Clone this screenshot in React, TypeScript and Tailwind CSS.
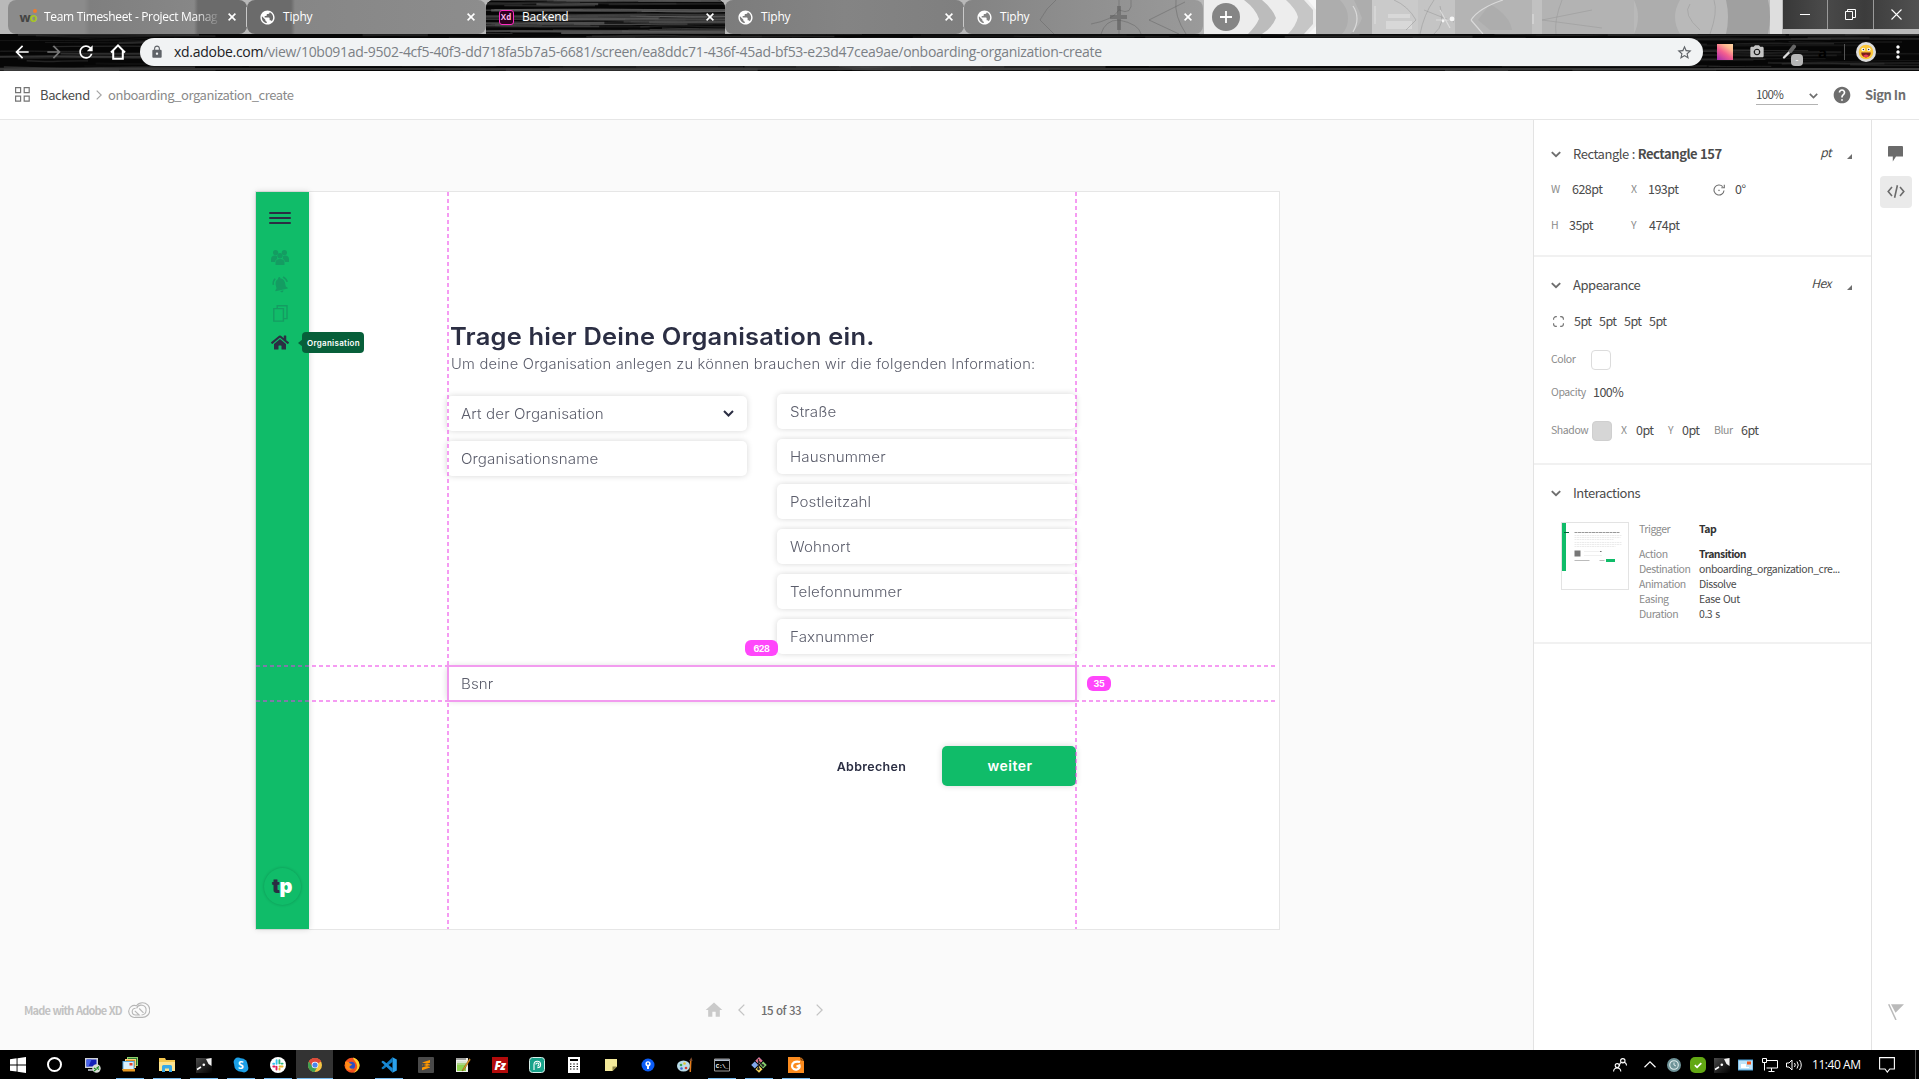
import React from "react";
import {
  MdPublic,
  MdLock,
  MdStarBorder,
  MdArrowBack,
  MdArrowForward,
  MdRefresh,
  MdMoreVert,
  MdHelp,
  MdHome,
  MdCameraAlt,
  MdNotificationsActive,
} from "react-icons/md";
import { FaHome } from "react-icons/fa";

/* ---------- browser theme textures ---------- */

function rng(seed: number) {
  let s = seed;
  return () => {
    s = (s * 16807) % 2147483647;
    return s / 2147483647;
  };
}

function Streaks({ w, h, seed, n, strong }: { w: number; h: number; seed: number; n: number; strong?: boolean }) {
  const r = rng(seed);
  const paths = Array.from({ length: n }, () => {
    const x = r() * w - 60;
    const y = r() * h;
    const len = 60 + r() * 200;
    const d = (r() - 0.5) * 4;
    const g = Math.round((strong ? 50 : 30) + r() * (strong ? 70 : 45));
    return {
      d: `M${x} ${y} q${len / 3} ${d} ${len / 2} ${d / 2} t${len / 2} ${-d / 3}`,
      c: `rgb(${g},${g},${g})`,
      sw: 0.6 + r() * 1.8,
      o: 0.3 + r() * 0.5,
    };
  });
  return (
    <svg className="absolute inset-0 h-full w-full" viewBox={`0 0 ${w} ${h}`} preserveAspectRatio="none">
      <rect width={w} height={h} fill="#060606" />
      {paths.map((p, i) => (
        <path key={i} d={p.d} stroke={p.c} strokeWidth={p.sw} opacity={p.o} fill="none" />
      ))}
      {!strong && <path d={`M0 ${h - 2}h${w}`} stroke="#4a4a4a" strokeWidth="2" opacity="0.7" />}
    </svg>
  );
}

function Forest() {
  return (
    <svg className="absolute inset-0 h-full w-full" viewBox="0 0 1919 34">
      <rect width="1919" height="34" fill="#b9b9b9" />
      <path d="M1204 0h112v34h-112z" fill="#ededed" />
      <path d="M1244 0h18q10 8 14 18q-4 10-14 16h-14q8-8 11-15q-3-10-15-19z" fill="#bcbcbc" />
      <path d="M1286 0h18l9 10v14l-9 10h-16q8-8 10-17q-2-8-12-17z" fill="#c6c6c6" />
      <path d="M1316 0h56q4 16 0 34h-56z" fill="#adadad" />
      <path d="M1340 0q8 8 8 18t-6 16h8q10-8 12-16q-4-10-8-18z" fill="#b6b6b6" />
      <path d="M1372 0h46v34h-46z" fill="#cacaca" />
      <path d="M1388 14h22v4h-22zM1386 21h26v8h-26z" fill="#d8d8d8" />
      <path d="M1418 0h37v34h-37z" fill="#c4c4c4" />
      <path d="M1455 0h77v34h-77z" fill="#b4b4b4" />
      <path d="M1490 4q20 12 22 26h-22l-12-10z" fill="#adadad" />
      <path d="M1532 0h10v34h-10z" fill="#c1c1c1" />
      <path d="M1542 0h92v34h-92z" fill="#b3b3b3" />
      <path d="M1634 0h46q-10 17 0 34h-46q8-17 0-34z" fill="#adadad" />
      <path d="M1726 0h42q4 16 0 34h-42q4-17 0-34z" fill="#a0a0a0" />
      <path d="M1770 0h12v34h-12z" fill="#dedede" />
      <g fill="none" stroke="#999" strokeWidth="0.9" opacity="0.6">
        <path d="M1394 0q14 6 22 20l-10 10M1420 34q4-20 14-34M1424 10l30 12M1440 6q6 18-6 28M1542 20l50-10M1542 20l60 8M1690 4q-8 10 10 26M1714 0q4 12-4 34M1556 34q-2-14 6-34" />
      </g>
      <g fill="none" stroke="#e2e2e2" strokeWidth="1.200" opacity="0.8">
        <path d="M1471 20q8-12 32-20M1471 20l12 14M1436 20h14M1440 10l10 18M1353 6q8 12 0 26M1375 6v18M1533 14v10" />
      </g>
      <g fill="#f6f6f6">
        <circle cx="1452" cy="19" r="2.400" />
        <circle cx="1443" cy="21" r="1.400" />
        <path d="M1308 0h8v10zM1308 34h8v-8z" />
      </g>
    </svg>
  );
}

function Branches() {
  return (
    <svg className="absolute inset-0 h-full w-full" viewBox="0 0 239 34">
      <g fill="none" stroke="#666" strokeWidth="1" opacity="0.5">
        <path d="M92 0q-10 8-16 20l14 14M155 0v10q-6 10-28 14M155 34v-14M155 10q14 6 12-10M155 20q20 4 22 14M155 20q-14 0-18 14M185 20l36-18M185 20l30 14M212 0q-2 16 10 34" />
      </g>
      <path d="M153 6h4v24h-4zM146 15h17v4h-17z" fill="#555" opacity="0.5" />
    </svg>
  );
}

/* ---------- browser chrome ---------- */

function Close() {
  return (
    <svg className="h-2 w-2 shrink-0" viewBox="0 0 8 8">
      <path d="M.6.6l6.8 6.8M7.4.6L.6 7.4" stroke="#fff" strokeWidth="1.6" />
    </svg>
  );
}

type TabProps = { title: string; icon: React.ReactNode; tone: string; active?: boolean; branches?: boolean; sep?: boolean; wide?: boolean };

function Tab({ title, icon, tone, active, branches, sep, wide }: TabProps) {
  return (
    <div className={`relative flex h-[34px] w-[239px] shrink-0 items-center overflow-hidden ${active ? "rounded-t-lg" : "rounded-lg"} ${tone}`}>
      {active && <Streaks w={239} h={34} seed={77} n={70} strong />}
      {branches && <Branches />}
      {sep && <div className="absolute right-0 top-[7px] h-5 w-px bg-[#c9c9c9]" />}
      <div className="relative flex w-full items-center pl-3 pr-[11px]">
        <div className="flex h-4 w-4 shrink-0 items-center justify-center">{icon}</div>
        <div
          className={`ml-2 h-4 w-[176px] shrink-0 whitespace-nowrap font-['Open_Sans'] text-[12px] leading-4 text-white ${
            wide ? "tracking-[-0.32px] [mask-image:linear-gradient(to_right,#000_150px,transparent_178px)]" : "tracking-[-0.2px]"
          }`}
        >
          {title}
        </div>
        <div className="ml-auto">
          <Close />
        </div>
      </div>
    </div>
  );
}

const globe = <MdPublic className="h-[17px] w-[17px] shrink-0 text-white" />;

function TabStrip() {
  return (
    <div className="relative flex h-[34px] pl-2">
      <Forest />
      <Tab
        title="Team Timesheet - Project Manag"
        tone="bg-[linear-gradient(to_right,#8b8b8b_0,#8b8b8b_76px,#7f7f7f_82px,#878787_186px,#6b6b6b_190px)]"
        sep
        wide
        icon={
          <div className="relative font-['Open_Sans'] text-[13px] font-bold leading-4 tracking-[-1px] text-[#444]">
            w<span className="text-[#a6c526]">o</span>
            <div className="absolute right-0 top-0 h-1 w-1 rounded-full bg-[#f07a2d]" />
          </div>
        }
      />
      <Tab title="Tiphy" icon={globe} tone="bg-[linear-gradient(to_right,#6b6b6b_0,#6b6b6b_44px,#868686_48px,#8d8d8d)]" />
      <Tab
        title="Backend"
        tone="bg-black"
        active
        icon={
          <div className="flex h-[15px] w-[15px] items-center justify-center rounded-[3px] border border-[#ff2bc2] bg-[#2e001f] font-['Open_Sans'] text-[8px] font-bold leading-none text-[#ffb3ea]">
            Xd
          </div>
        }
      />
      <Tab title="Tiphy" icon={globe} tone="bg-[linear-gradient(to_right,#7c7c7c,#848484_50%,#7f7f7f)]" sep />
      <Tab title="Tiphy" icon={globe} tone="bg-[linear-gradient(to_right,#838383,#8f8f8f_50%,#9a9a9a)]" branches />
      <div className="relative ml-[9px] mt-[3px] flex h-7 w-7 items-center justify-center rounded-full bg-[#858585]">
        <svg className="h-3 w-3" viewBox="0 0 12 12">
          <path d="M6 0v12M0 6h12" stroke="#fff" strokeWidth="1.8" />
        </svg>
      </div>
      <div className="relative ml-auto flex h-[29px] w-[136px] bg-[linear-gradient(to_right,#383838,#4a4a4a_30%,#3c3c3c_60%,#515151)]">
        <div className="flex w-[45px] items-center justify-center border-r border-[#9a9a9a]">
          <div className="h-px w-[10px] bg-white" />
        </div>
        <div className="flex w-[46px] items-center justify-center border-r border-[#9a9a9a]">
          <svg className="h-[11px] w-[11px]" viewBox="0 0 11 11" fill="none" stroke="#fff">
            <path d="M.5 2.5h7v8h-7zM2.5 2.5v-2h8v8h-3" />
          </svg>
        </div>
        <div className="flex w-[45px] items-center justify-center">
          <svg className="h-[11px] w-[11px]" viewBox="0 0 11 11">
            <path d="M.5.5l10 10M10.5.5l-10 10" stroke="#fff" strokeWidth="1.1" />
          </svg>
        </div>
      </div>
    </div>
  );
}

function Toolbar() {
  return (
    <div className="relative flex h-[37px] items-center pb-px pl-3">
      <Streaks w={1919} h={37} seed={4242} n={190} />
      <div className="relative flex w-full items-center">
        <MdArrowBack className="h-5 w-5 text-white" />
        <MdArrowForward className="ml-3 h-5 w-5 text-[#777]" />
        <MdRefresh className="ml-3 h-5 w-5 text-white" />
        <svg className="ml-3 h-5 w-5" viewBox="0 0 20 20" fill="none" stroke="#fff" strokeWidth="2">
          <path d="M3 10.5L10 3.4l7 7.1M5.2 9v7.8h9.6V9" />
        </svg>
        <div className="ml-3 flex h-7 w-[1563px] items-center rounded-full bg-[#f1f3f4] pl-[10px] pr-[10px]">
          <MdLock className="h-[14px] w-[14px] text-[#5f6368]" />
          <div className="ml-[10px] flex-1 whitespace-nowrap font-['Open_Sans'] text-[14px] leading-5 tracking-[-0.285px] text-[#7b8085]">
            <span className="text-[#202124]">xd.adobe.com</span>
            /view/10b091ad-9502-4cf5-40f3-dd718fa5b7a5-6681/screen/ea8ddc71-436f-45ad-bf53-e23d47cea9ae/onboarding-organization-create
          </div>
          <MdStarBorder className="h-[17px] w-[17px] text-[#5f6368]" />
        </div>
        <div className="ml-[14px] h-4 w-4 bg-[linear-gradient(35deg,#a32bb0,#f4608f_45%,#ffb98f_75%,#ffd9a8)]" />
        <MdCameraAlt className="ml-4 h-4 w-4 text-[#c4c4c4]" />
        <div className="relative ml-[17px] h-4 w-4">
          <svg className="h-4 w-4" viewBox="0 0 16 16">
            <path d="M2 13.5L8.5 7" stroke="#ddd" strokeWidth="2.4" strokeLinecap="round" />
            <path d="M8.5 7L12 2.5" stroke="#666" strokeWidth="4" strokeLinecap="round" />
          </svg>
          <div className="absolute left-[9px] top-[10px] h-3 w-3 rounded-sm bg-[#b5b5b5] text-center font-['Open_Sans'] text-[9px] leading-[11px] text-white">-</div>
        </div>
        <div className="ml-5 w-[10px] font-['Open_Sans'] text-[15px] font-bold leading-4 text-black">a</div>
        <div className="ml-4 h-4 w-px bg-[#555]" />
        <svg className="ml-[11px] h-5 w-5" viewBox="0 0 20 20">
          <circle cx="10" cy="10" r="10" fill="#ddd" />
          <circle cx="10" cy="10" r="7.3" fill="#fbc73a" />
          <path d="M5.2 10.5h9.6a4.8 5 0 0 1-9.6 0z" fill="#7a1f1a" />
          <path d="M7 14q3-3 6 0q-3 2.4-6 0z" fill="#ee3d5a" />
          <circle cx="7.2" cy="7.5" r="1.8" fill="#fff" />
          <circle cx="12.8" cy="7.5" r="1.8" fill="#fff" />
          <circle cx="7.4" cy="7.5" r=".8" fill="#333" />
          <circle cx="12.6" cy="7.5" r=".8" fill="#333" />
        </svg>
        <MdMoreVert className="ml-3 h-5 w-5 text-white" />
      </div>
    </div>
  );
}

function AppHeader() {
  return (
    <div className="flex h-[49px] items-center border-b border-[#e6e6e6] bg-white pb-px pl-[15px] pr-[13px] font-['Noto_Sans_CJK_SC'] text-[#4b4b4b]">
      <svg className="h-[15px] w-[15px]" viewBox="0 0 15 15" fill="none" stroke="#747474" strokeWidth="1.2">
        <path d="M.6.6h5v5h-5zM9.2.6h5v5h-5zM.6 9.2h5v5h-5zM9.2 9.2h5v5h-5z" />
      </svg>
      <div className="ml-[10px] w-[49px] whitespace-nowrap text-[13px] leading-5 tracking-[-0.4px]">Backend</div>
      <svg className="ml-[7px] h-[10px] w-[6px]" viewBox="0 0 6 10" fill="none" stroke="#a5a5a5" strokeWidth="1.2">
        <path d="M.7.6L5.2 5 .7 9.4" />
      </svg>
      <div className="ml-[6px] whitespace-nowrap text-[13px] leading-5 tracking-[-0.44px] text-[#8a8a8a]">onboarding_organization_create</div>
      <div className="ml-auto flex h-5 w-[62px] items-center justify-between border-b border-[#b3b3b3] text-[11.5px] leading-5 tracking-[-0.6px]">
        <span>100%</span>
        <svg className="mt-1 h-[6px] w-[9px]" viewBox="0 0 9 6" fill="none" stroke="#6e6e6e" strokeWidth="1.7">
          <path d="M.8.8l3.7 3.7L8.200.8" />
        </svg>
      </div>
      <MdHelp className="ml-[14px] h-5 w-5 text-[#6e6e6e]" />
      <div className="ml-[13px] w-[41px] whitespace-nowrap text-[13px] font-bold leading-5 tracking-[-0.45px] text-[#6e6e6e]">Sign In</div>
    </div>
  );
}

/* ---------- artboard ---------- */

function Field({ label, children, offset, pad }: { label: string; children?: React.ReactNode; offset?: string; pad?: string }) {
  return (
    <div
      className={`flex h-[35px] items-center justify-between rounded-[5px] bg-white pr-[13px] shadow-[0_0_6px_rgba(0,0,0,0.16)] ${pad ?? "pl-[13px]"} ${offset ?? ""}`}
    >
      <span className="origin-left scale-x-[1.08] font-['Inter'] text-[14px] font-light leading-5 tracking-[0.1px] text-[#5b5d6b]">{label}</span>
      {children}
    </div>
  );
}

function Artboard() {
  return (
    <div className="relative ml-[255px] mt-[71px] flex h-[739px] w-[1025px] border border-[#e6e6e6] bg-white">
      <div className="relative flex w-[53px] flex-col items-center bg-[#10bc69] shadow-[0_0_6px_rgba(0,0,0,0.16)]">
        <div className="mr-[5px] mt-5 flex flex-col gap-[3px]">
          <div className="h-[2px] w-[22px] rounded-full bg-[#2b2e43]" />
          <div className="h-[2px] w-[22px] rounded-full bg-[#2b2e43]" />
          <div className="h-[2px] w-[22px] rounded-full bg-[#2b2e43]" />
        </div>
        <svg className="mr-[5px] mt-[26px] h-[15px] w-[18px]" viewBox="0 0 18 15" fill="#149c62">
          <circle cx="4.600" cy="2.600" r="2.600" />
          <circle cx="13.400" cy="2.600" r="2.600" />
          <path d="M0 12V9.500Q0 5.600 4 5.600q1.400 0 2 .6A4 4 0 0 0 6.400 8.800Q4.200 9.800 4 12zM18 12V9.500Q18 5.600 14 5.600q-1.400 0-2 .6A4 4 0 0 1 11.600 8.800Q13.800 9.800 14 12z" />
          <circle cx="9" cy="5.700" r="2.700" />
          <path d="M4.500 15v-2.500Q4.500 8.900 9 8.900t4.500 3.600V15z" />
        </svg>
        <MdNotificationsActive className="mr-[5px] mt-[10px] h-[19px] w-[19px] -rotate-12 text-[#149c62]" />
        <svg className="mr-[5px] mt-[11px] h-[17px] w-[15px]" viewBox="0 0 15 17" fill="none" stroke="#149c62" strokeWidth="1.4">
          <path d="M.8 3.600h9.600v12.500H.8z" />
          <path d="M4.200 3.200V.8h9.800v12.800h-3.200" />
        </svg>
        <FaHome className="mr-[5px] mt-[11px] h-[19px] w-[18px] text-[#2b2e43]" />
        <div className="mb-6 mr-px mt-auto flex h-[37px] w-[37px] items-center justify-center rounded-full pb-[2px] font-['Inter'] text-[20px] font-black leading-none tracking-[-0.5px] text-white shadow-[0_0_3px_rgba(0,0,0,0.22)]">
          <span className="text-[#2b2e43]">t</span>p
        </div>
        <div className="absolute left-[46px] top-[140px] flex h-[21px] w-[62px] items-center justify-center rounded-sm bg-[#075f3a] pl-px font-['Inter'] text-[8px] font-semibold tracking-[0.3px] text-white">
          Organisation
          <div className="absolute -left-1 top-[7px] h-0 w-0 border-y-[4px] border-r-[5px] border-y-transparent border-r-[#075f3a]" />
        </div>
      </div>

      <div className="ml-[138px] w-[629px] pt-[129px]">
        <h1 className="ml-[3px] origin-left scale-x-[1.061] whitespace-nowrap font-['Inter'] text-[24px] font-semibold leading-[32px] tracking-[0.2px] text-[#2b2e43]">
          Trage hier Deine Organisation ein.
        </h1>
        <p className="ml-1 origin-left scale-x-[1.05] whitespace-nowrap font-['Inter'] text-[14px] font-light leading-[22px] tracking-[0.2px] text-[#5b5d6b]">
          Um deine Organisation anlegen zu können brauchen wir die folgenden Information:
        </p>
        <div className="mt-[19px] grid grid-cols-[300px_299px] gap-x-[30px]">
          <div className="flex flex-col gap-[10px] pt-[2px]">
            <Field label="Art der Organisation" pad="pl-[14px]">
              <svg className="h-[7px] w-[11px]" viewBox="0 0 11 7" fill="none" stroke="#2b2e43" strokeWidth="2">
                <path d="M1 1l4.500 4.500L10 1" />
              </svg>
            </Field>
            <Field label="Organisationsname" pad="pl-[14px]" />
          </div>
          <div className="flex flex-col gap-[10px]">
            <Field label="Straße" />
            <Field label="Hausnummer" />
            <Field label="Postleitzahl" />
            <Field label="Wohnort" />
            <Field label="Telefonnummer" />
            <Field label="Faxnummer" />
          </div>
        </div>
        <Field label="Bsnr" offset="mt-3" pad="pl-[14px]" />
        <div className="mt-[45px] flex items-center justify-end">
          <span className="mr-[37px] mt-[2px] origin-center scale-x-[1.04] font-['Inter'] text-[12px] font-semibold tracking-[0.3px] text-[#2b2e43]">Abbrechen</span>
          <div className="flex h-10 w-[134px] items-center justify-center rounded-[5px] bg-[#10bc69] pb-px pl-[2px] font-['Inter'] text-[14px] font-semibold tracking-[0.5px] text-white shadow-[0_0_6px_rgba(0,0,0,0.16)]">
            weiter
          </div>
        </div>
      </div>

      {/* measurement guides of the selected rectangle */}
      <div className="absolute left-[191px] top-0 h-full w-[2px] bg-[repeating-linear-gradient(to_bottom,rgba(236,57,230,0.5)_0_4px,transparent_4px_7px)]" />
      <div className="absolute left-[819px] top-0 h-full w-[2px] bg-[repeating-linear-gradient(to_bottom,rgba(236,57,230,0.5)_0_4px,transparent_4px_7px)]" />
      <div className="absolute left-0 top-[473px] h-[2px] w-[1022px] bg-[repeating-linear-gradient(to_right,rgba(236,57,230,0.5)_0_4px,transparent_4px_7px)]" />
      <div className="absolute left-0 top-[508px] h-[2px] w-[1022px] bg-[repeating-linear-gradient(to_right,rgba(236,57,230,0.5)_0_4px,transparent_4px_7px)]" />
      <div className="absolute left-[191px] top-[473px] h-[37px] w-[630px] border-2 border-[#f29bef]" />
      <div className="absolute left-[489px] top-[448px] flex h-4 w-[33px] items-center justify-center rounded-md bg-[#ff47fb] font-['Inter'] text-[9px] font-bold leading-none tracking-[-0.4px] text-white">
        628
      </div>
      <div className="absolute left-[831px] top-[484px] flex h-[15px] w-6 items-center justify-center rounded-md bg-[#ff47fb] font-['Inter'] text-[9px] font-bold leading-none tracking-[-0.4px] text-white">
        35
      </div>
    </div>
  );
}

function CanvasFooter() {
  return (
    <div className="mb-[30px] mt-auto flex h-5 items-center pl-6 font-['Noto_Sans_CJK_SC']">
      <span className="w-[95px] whitespace-nowrap text-[11px] font-bold leading-5 tracking-[-0.85px] text-[#c2c2c2] [word-spacing:0.8px]">Made with Adobe XD</span>
      <svg className="ml-[9px] h-4 w-[22px]" viewBox="0 0 22 16" fill="none" stroke="#b5b5b5" strokeWidth="1.1">
        <path d="M7.500 15.400h7a7.200 7.200 0 0 0 0-14.600 7.200 7.200 0 0 0-6 3A5.800 5.800 0 0 0 .7 9.600a6 6 0 0 0 6.800 5.800z" />
        <path d="M13.500 13a4.900 4.900 0 1 0-4.900-6.600M7.600 6.200a3.400 3.400 0 1 0 0 6.800h3.600L6.800 8.800M15.500 10.800L11.200 6.500" />
      </svg>
      <MdHome className="ml-[554px] h-5 w-5 text-[#cacaca]" />
      <svg className="ml-[14px] h-3 w-[7px]" viewBox="0 0 7 12" fill="none" stroke="#c4c4c4" strokeWidth="1.300">
        <path d="M6.300.6L.9 6l5.400 5.400" />
      </svg>
      <span className="ml-4 w-[40px] whitespace-nowrap text-[11.5px] font-medium leading-5 tracking-[-0.55px] text-[#6e6e6e] [word-spacing:1px]">15 of 33</span>
      <svg className="ml-[15px] h-3 w-[7px]" viewBox="0 0 7 12" fill="none" stroke="#c4c4c4" strokeWidth="1.300">
        <path d="M.7.6L6.100 6 .7 11.400" />
      </svg>
    </div>
  );
}

/* ---------- inspector ---------- */

function SectionHead({ children, unit }: { children: React.ReactNode; unit?: string }) {
  return (
    <div className="flex h-5 items-center">
      <svg className="h-[7px] w-[10px]" viewBox="0 0 10 7" fill="none" stroke="#6e6e6e" strokeWidth="1.900">
        <path d="M.8 1.100L5 5.200l4.200-4.100" />
      </svg>
      <div className="ml-3 whitespace-nowrap text-[13px] leading-5 tracking-[-0.45px] [word-spacing:0.4px]">{children}</div>
      {unit && (
        <div className="ml-auto flex items-center">
          <span className="-mt-1 text-[12px] italic leading-5 tracking-[-0.5px]">{unit}</span>
          <svg className="ml-4 mt-[5px] h-[5px] w-[5px]" viewBox="0 0 5 5">
            <path d="M5 0v5H0z" fill="#6e6e6e" />
          </svg>
        </div>
      )}
    </div>
  );
}

const labelText = "text-[10.5px] tracking-[-0.4px] text-[#8c8c8c]";
const valueText = "text-[12.5px] tracking-[-0.55px]";

function Val({ k, v, kw, w }: { k: React.ReactNode; v: string; kw: string; w?: string }) {
  return (
    <div className={`flex items-center ${w ?? ""}`}>
      <span className={`${kw} ${labelText}`}>{k}</span>
      <span className={valueText}>{v}</span>
    </div>
  );
}

function Thumbnail() {
  return (
    <div className="h-[68px] w-[68px] border border-[#e3e3e3] bg-white">
      <svg className="h-[66px] w-[66px]" viewBox="0 0 66 66">
        <rect width="4" height="48" fill="#10bc69" />
        <rect x="2" y="9" width="5" height="1" fill="#075f3a" />
        <path d="M12.500 9.500h45" stroke="#999" strokeWidth="1" strokeDasharray="3 .5" />
        <path d="M12.500 12.500h47M12.500 14.500h46M12.500 16.500h39M12.500 19.500h47M12.500 21.500h47M12.500 23.500h41" stroke="#ececec" strokeWidth="1" strokeDasharray="2 .5" />
        <rect x="12.500" y="27.500" width="6" height="6" fill="#777" />
        <path d="M22 28.500h18M22 32.500h18" stroke="#f0f0f0" />
        <rect x="38" y="28" width="1.500" height="1" fill="#777" />
        <path d="M12.500 37.500h15M37.500 37.500h5" stroke="#bbb" />
        <rect x="44" y="36" width="9" height="3" fill="#10bc69" />
      </svg>
    </div>
  );
}

const interactions: [string, string, boolean][] = [
  ["Action", "Transition", true],
  ["Destination", "onboarding_organization_cre...", false],
  ["Animation", "Dissolve", false],
  ["Easing", "Ease Out", false],
  ["Duration", "0.3 s", false],
];

function Inspector() {
  return (
    <div className="w-[338px] border-l border-[#e3e3e3] bg-white font-['Noto_Sans_CJK_SC'] leading-5 text-[#4b4b4b]">
      <div className="h-[137px] border-b-2 border-[#f1f1f1] pl-[17px] pr-[19px] pt-6">
        <SectionHead unit="pt">
          Rectangle : <b>Rectangle 157</b>
        </SectionHead>
        <div className="mt-[15px] flex h-5 items-center">
          <Val k="W" v="628pt" kw="w-[21px]" w="w-[80px]" />
          <Val k="X" v="193pt" kw="w-[17px]" w="w-[82px]" />
          <svg className="mt-[2px] h-3 w-3" viewBox="0 0 12 12" fill="none" stroke="#6e6e6e" strokeWidth="1.100">
            <path d="M11 6.500A5 5 0 1 1 9.700 2.600M11.300.8v3H8.300" />
            <circle cx="6" cy="6.300" r=".5" fill="#6e6e6e" strokeWidth=".5" />
          </svg>
          <span className={`ml-[10px] ${valueText}`}>0°</span>
        </div>
        <div className="mt-4 flex h-5 items-center">
          <Val k="H" v="35pt" kw="w-[18px]" w="w-[80px]" />
          <Val k="Y" v="474pt" kw="w-[18px]" />
        </div>
      </div>

      <div className="h-[208px] border-b-2 border-[#f1f1f1] pl-[17px] pr-[19px] pt-[18px]">
        <SectionHead unit="Hex">Appearance</SectionHead>
        <div className={`mt-4 flex h-5 items-center pl-[2px] ${valueText}`}>
          <svg className="mt-px h-[11px] w-[11px]" viewBox="0 0 11 11" fill="none" stroke="#6e6e6e" strokeWidth="1.100">
            <path d="M.6 3.800V3A2.400 2.400 0 0 1 3 .6h.8M7.200.6H8A2.400 2.400 0 0 1 10.400 3v.8M10.400 7.200V8A2.400 2.400 0 0 1 8 10.400h-.8M3.800 10.400H3A2.400 2.400 0 0 1 .6 8v-.8" />
          </svg>
          <span className="ml-[10px] w-[25px]">5pt</span>
          <span className="w-[25px]">5pt</span>
          <span className="w-[25px]">5pt</span>
          <span>5pt</span>
        </div>
        <div className="mt-[18px] flex h-5 items-center">
          <span className={`w-[40px] ${labelText}`}>Color</span>
          <div className="mt-px h-5 w-5 rounded-sm border border-[#dcdcdc] bg-white" />
        </div>
        <div className="mt-[13px] flex h-5 items-center">
          <span className={`w-[42px] ${labelText}`}>Opacity</span>
          <span className={valueText}>100%</span>
        </div>
        <div className="mt-[18px] flex h-5 items-center">
          <span className={`w-[41px] ${labelText}`}>Shadow</span>
          <div className="mr-[9px] mt-px h-5 w-5 rounded-sm border border-[#cfcfcf] bg-[#d6d6d6]" />
          <Val k="X" v="0pt" kw="w-[15px]" w="w-[47px]" />
          <Val k="Y" v="0pt" kw="w-[14px]" w="w-[46px]" />
          <Val k="Blur" v="6pt" kw="w-[27px]" />
        </div>
      </div>

      <div className="h-[179px] border-b-2 border-[#f1f1f1] pl-[17px] pt-[18px]">
        <SectionHead>Interactions</SectionHead>
        <div className="ml-[10px] mt-[19px] flex">
          <Thumbnail />
          <div className="-mt-px ml-[10px] text-[10.5px] leading-[15px] tracking-[-0.44px] [word-spacing:1px]">
            <div className="flex">
              <span className="w-[60px] text-[#8c8c8c]">Trigger</span>
              <b className="text-[#323232]">Tap</b>
            </div>
            <div className="h-[10px]" />
            {interactions.map(([k, v, bold]) => (
              <div key={k} className="flex whitespace-nowrap">
                <span className="w-[60px] text-[#8c8c8c]">{k}</span>
                <span className={bold ? "font-bold tracking-[-0.55px] text-[#323232]" : ""}>{v}</span>
              </div>
            ))}
          </div>
        </div>
      </div>
    </div>
  );
}

function Rail() {
  return (
    <div className="flex w-[48px] flex-col items-center border-l border-[#e3e3e3] bg-white pt-[26px]">
      <svg className="h-4 w-[15px]" viewBox="0 0 15 16">
        <path d="M1 0h13a1 1 0 0 1 1 1v9.500H8L4.800 15.500v-5H0V1a1 1 0 0 1 1-1z" fill="#6b6b6b" />
      </svg>
      <div className="mt-[14px] flex h-8 w-8 items-center justify-center rounded bg-[#eaeaea]">
        <svg className="-mt-px h-[13px] w-[18px]" viewBox="0 0 18 13" fill="none" stroke="#6b6b6b" strokeWidth="1.600">
          <path d="M5 2L1.200 6.500 5 11M13 2l3.800 4.500L13 11M10.400.3L7.600 12.700" />
        </svg>
      </div>
      <svg className="mb-[30px] mt-auto h-4 w-4" viewBox="0 0 16 16">
        <path d="M.7.300L8 16" stroke="#bababa" strokeWidth="1.500" />
        <path d="M3 .3h13L7.500 8.800z" fill="#bababa" />
      </svg>
    </div>
  );
}

/* ---------- taskbar ---------- */

function Ico({ children }: { children: React.ReactNode }) {
  return (
    <svg className="h-4 w-4" viewBox="0 0 16 16">
      {children}
    </svg>
  );
}

const pen = (
  <Ico>
    <defs>
      <linearGradient id="pen" x1="0" y1="0" x2="1" y2="1">
        <stop offset="0" stopColor="#4a4a4a" />
        <stop offset="1" stopColor="#000" />
      </linearGradient>
    </defs>
    <path d="M0 1h16v15H0z" fill="url(#pen)" />
    <path d="M10 2l5.500-1v8l-3-2z" fill="#f2f2f2" />
    <path d="M1 12.500L5 10" stroke="#fff" strokeWidth="1.500" />
    <circle cx="7.800" cy="7.800" r="1.300" fill="#fff" />
  </Ico>
);

type Task = { id: string; icon: React.ReactNode; open?: boolean; active?: boolean };

const tasks: Task[] = [
  { id: "putty", icon: (
    <Ico>
      <rect x="0" y="1" width="13" height="10" fill="#cfd3d8" /><rect x="1.500" y="2.500" width="10" height="7" fill="#1420b8" />
      <path d="M1.500 2.500h5l-3 7h-2z" fill="#4763e8" /><path d="M3 12h8v2H3z" fill="#9aa0a6" />
      <circle cx="11.500" cy="11.500" r="4.200" fill="#d8dcd5" /><path d="M9 11l2 1.500L9 14M14 9.500l-2 1.500 2 1.500" stroke="#178a1e" fill="none" strokeWidth="1.200" />
    </Ico>
  ) },
  { id: "vm", open: true, icon: (
    <Ico>
      <rect x="5.500" y=".5" width="10" height="8" fill="#2b7a33" stroke="#8fd16b" /><rect x="3.500" y="2.500" width="10" height="8" fill="#d98d1c" stroke="#ffd27a" />
      <rect x="1" y="4.500" width="11" height="8" fill="#d9f0fc" stroke="#5aa9e0" /><rect x="7.500" y="6" width="3" height="2.500" fill="#e0452b" />
      <path d="M0 12h13v2.500H1z" fill="#e79a24" />
    </Ico>
  ) },
  { id: "explorer", open: true, icon: (
    <Ico>
      <path d="M0 1h6l1 2h9v11H0z" fill="#f4c64e" /><path d="M0 5h16v9H0z" fill="#fde38e" /><path d="M3 15V9.500a1.500 1.500 0 0 1 1.500-1.500h7A1.500 1.500 0 0 1 13 9.500V15h-3v-3.500H6V15z" fill="#38a9e8" />
    </Ico>
  ) },
  { id: "pen", open: true, icon: pen },
  { id: "skype", open: true, icon: (
    <Ico>
      <circle cx="8" cy="8" r="6.800" fill="#1c9fe6" /><circle cx="5" cy="5" r="4.400" fill="#1c9fe6" /><circle cx="11" cy="11" r="4.400" fill="#1c9fe6" />
      <text x="8" y="11.800" textAnchor="middle" fontFamily="Open Sans" fontWeight="700" fontSize="10.500" fill="#fff">S</text>
    </Ico>
  ) },
  { id: "slack", open: true, icon: (
    <Ico>
      <circle cx="8" cy="8" r="8" fill="#fff" />
      <g strokeWidth="1.900" strokeLinecap="round">
        <path d="M6.600 3.200v3.500M3.200 6.700h1" stroke="#36c5f0" /><path d="M9.400 3.200v3.200M12.600 6.600H11.500" stroke="#2eb67d" /><path d="M9.600 9.500h3M9.500 11.600v1" stroke="#ecb22e" /><path d="M6.500 9.600v3M3.300 9.500h1.200" stroke="#e01e5a" />
      </g>
    </Ico>
  ) },
  { id: "chrome", open: true, active: true, icon: (
    <Ico>
      <circle cx="8" cy="8" r="7" fill="#f6c544" /><path d="M8 8L1.900 4.500A7 7 0 0 1 14.100 4.500z" fill="#de4b3c" /><path d="M1.900 4.500A7 7 0 0 0 7.500 15l3-5.500L8 8z" fill="#3f9f52" /><path d="M8 4.500h6.100A7 7 0 0 0 1.900 4.500L5 9z" fill="#de4b3c" />
      <circle cx="8" cy="8" r="3.300" fill="#fff" /><circle cx="8" cy="8" r="2.600" fill="#4a85ee" />
    </Ico>
  ) },
  { id: "firefox", icon: (
    <Ico>
      <circle cx="8" cy="8.300" r="7.500" fill="#f4511e" /><path d="M9 .5c4 1 7 4.500 6.500 8.500S12 15.500 9 15.800c4-2 5-6 3.500-9C11.500 4 9.500 3 9 .5z" fill="#ffcf2e" /><circle cx="7.300" cy="8.500" r="3.800" fill="#2b4fc4" /><path d="M1 5c2-1 4 0 5 1.500l2 .8c0 1.400-2 1.200-2.500 2.200C5 11 7 12 9 11.500c-2 3-6.500 2-7.500-1z" fill="#ff8a16" />
    </Ico>
  ) },
  { id: "code", open: true, icon: (
    <Ico>
      <path d="M11.500.300L15.800 2.400v11.200L11.500 15.700z" fill="#2aa1ec" /><path d="M11.700.200v4.600L3 11.800 1.600 12.200.300 11z" fill="#0f7cc4" /><path d="M11.700 15.800v-4.600L3 4.200 1.600 3.800.300 5z" fill="#1b8ad6" />
    </Ico>
  ) },
  { id: "sublime", icon: (
    <Ico>
      <rect width="16" height="16" rx="1" fill="#4a4a4a" /><path d="M4 5.600L12 3v2.800L4 8.400zM4 7.400l8 2.500v-2.500L4 5.600zM4 10.500l8-2.600v2.600L4 13.200z" fill="#ff9800" />
    </Ico>
  ) },
  { id: "notepad", icon: (
    <Ico>
      <path d="M1 1h12v14H1z" fill="#eef0ea" /><path d="M2 1v2M4 1v2M6 1v2M8 1v2M10 1v2" stroke="#555" /><path d="M2 6h9v8H2z" fill="#8fd250" /><path d="M2 5h9M2 7h9" stroke="#c9d6bd" /><path d="M14.500 1.500L8 12l-1 2 2-1.200 6.500-10z" fill="#f5a623" stroke="#6a4010" strokeWidth=".5" />
    </Ico>
  ) },
  { id: "filezilla", icon: (
    <Ico>
      <rect width="16" height="16" fill="#b40b0b" /><text x="7.800" y="12.500" textAnchor="middle" fontFamily="Open Sans" fontStyle="italic" fontWeight="800" fontSize="11.500" letterSpacing="-.8" fill="#fff">Fz</text>
    </Ico>
  ) },
  { id: "paste", icon: (
    <Ico>
      <rect x=".5" y=".5" width="15" height="15" rx="3" fill="#18a28a" stroke="#d9efe9" /><path d="M5 13V7.500A3.300 3.300 0 1 1 8.300 10.800M8.300 9A1.500 1.500 0 1 0 6.900 7.500" fill="none" stroke="#fff" strokeWidth="1.100" />
    </Ico>
  ) },
  { id: "calc", icon: (
    <Ico>
      <path d="M2 0h12v16H2z" fill="#fff" /><path d="M4 2h8v2H4z" fill="#000" /><path d="M4 7h8M4 9.500h8M4 12h8" stroke="#000" strokeWidth="1.200" strokeDasharray="1.400 1.900" />
    </Ico>
  ) },
  { id: "note", icon: (
    <Ico>
      <path d="M2 2h12v7.500L9.500 14H2z" fill="#f3e99a" /><path d="M14 9.500H9.500V14z" fill="#8c8446" />
    </Ico>
  ) },
  { id: "pass", icon: (
    <Ico>
      <circle cx="8" cy="8" r="6.500" fill="#0b5cf5" /><circle cx="8" cy="6.800" r="2.600" fill="#fff" /><path d="M7 8.500h2v3.500H7z" fill="#fff" /><circle cx="8" cy="6.700" r="1.100" fill="#0b5cf5" />
    </Ico>
  ) },
  { id: "paint", icon: (
    <Ico>
      <ellipse cx="6.500" cy="9" rx="6.500" ry="5.500" fill="#b9dcea" /><circle cx="4" cy="8" r="1.300" fill="#3aa04c" /><circle cx="7.500" cy="6.500" r="1.300" fill="#e3c22d" /><circle cx="4.500" cy="11.500" r="1.300" fill="#3d66d0" /><circle cx="9" cy="11" r="1.300" fill="#d6382b" /><path d="M13 4l-.5 11h1.500L14.500 4z" fill="#e07a1b" /><path d="M12 4h3.500L14.500.300z" fill="#7d4a2a" />
    </Ico>
  ) },
  { id: "cmd", open: true, icon: (
    <Ico>
      <path d="M.5 2h15v12H.5z" fill="#000" stroke="#9b9b9b" /><path d="M1 3.200h14" stroke="#b9c4d6" strokeWidth="1.500" /><text x="1.800" y="11" fontFamily="Liberation Mono" fontWeight="700" fontSize="6" letterSpacing="-.500" fill="#fff">C:\_</text>
    </Ico>
  ) },
  { id: "git", open: true, icon: (
    <Ico>
      <g transform="rotate(45 8 8)">
        <rect x="2.500" y="2.500" width="5" height="5" fill="#82a8ec" /><rect x="8.500" y="2.500" width="5" height="5" fill="#86cf6c" />
        <rect x="2.500" y="8.500" width="5" height="5" fill="#82a8ec" /><rect x="8.500" y="8.500" width="5" height="5" fill="#f1d45c" />
        <rect x="2.500" y="2.500" width="5" height="5" fill="#e8708a" />
      </g>
      <path d="M7.500 2v10M8 4.500l4 4" stroke="#2a2a2a" strokeWidth="1.200" fill="none" /><circle cx="7.500" cy="12" r="1.300" fill="#2a2a2a" /><circle cx="12" cy="8.500" r="1.300" fill="#2a2a2a" />
    </Ico>
  ) },
  { id: "fox", open: true, icon: (
    <Ico>
      <path d="M0 0h12l4 4v12H0z" fill="#fb8b1e" /><path d="M13 0v3h3z" fill="#fb8b1e" stroke="#000" strokeWidth=".6" /><path d="M12 5C7 3.500 4 6 4 9s3 4 5 3.500S12 10 11.500 8.500L8.500 9.500" fill="none" stroke="#fff" strokeWidth="2.200" />
    </Ico>
  ) },
];

function Taskbar() {
  return (
    <div className="flex h-[29px] bg-black">
      <div className="flex w-9 items-center justify-center">
        <Ico>
          <path d="M0 2.200L6.600 1.300v6.200H0zM7.500 1.200L16 0v7.500H7.500zM0 8.400h6.600v6.200L0 13.700zM7.500 8.400H16V16l-8.500-1.200z" fill="#fff" />
        </Ico>
      </div>
      <div className="mr-[2px] flex w-9 items-center justify-center">
        <div className="h-[15px] w-[15px] rounded-full border-2 border-white" />
      </div>
      {tasks.map((t) => (
        <div key={t.id} className={`flex w-[37px] flex-col items-center pt-[7px] ${t.active ? "bg-[#333]" : ""}`}>
          {t.icon}
          {t.open && <div className={`mt-auto h-px bg-[#76b9ed] ${t.active ? "w-9" : "w-7"}`} />}
        </div>
      ))}
      <div className="ml-auto flex items-center">
        <svg className="h-[14px] w-[14px]" viewBox="0 0 14 14" fill="none" stroke="#fff" strokeWidth="1.100">
          <circle cx="9.800" cy="2.800" r="2.200" /><path d="M6.500 8a3.400 3.400 0 0 1 7-.5" /><circle cx="4.200" cy="7.600" r="2" /><path d="M.6 13.500a3.600 3.600 0 0 1 7.200 0" />
        </svg>
        <svg className="ml-[17px] h-[7px] w-[12px]" viewBox="0 0 12 7" fill="none" stroke="#fff" strokeWidth="1.200">
          <path d="M.5 6.300L6 .9l5.500 5.400" />
        </svg>
        <svg className="ml-[11px] h-[14px] w-[14px]" viewBox="0 0 14 14">
          <circle cx="7" cy="7" r="7" fill="#6f9499" /><circle cx="7" cy="7" r="4.300" fill="none" stroke="#dfeced" strokeWidth="1.100" /><path d="M7 4.500V7l2 1" fill="none" stroke="#dfeced" />
        </svg>
        <svg className="ml-[9px] h-4 w-4" viewBox="0 0 16 16">
          <path d="M5 0h6a5 5 0 0 1 5 5v6a5 5 0 0 1-5 5H5a5 5 0 0 1-5-5V5a5 5 0 0 1 5-5z" fill="#62a813" /><path d="M4.800 8.200l2.300 2.200 4.200-4.200" fill="none" stroke="#fff" strokeWidth="1.700" />
        </svg>
        <div className="ml-2">{pen}</div>
        <svg className="ml-2 h-3 w-[15px]" viewBox="0 0 15 12">
          <path d="M0 1h15v10H0z" fill="#bfe3f8" stroke="#4ba3dc" /><path d="M9 2.500h4v3H9z" fill="#f0561d" /><path d="M3 5h5v4H3z" fill="#fff" /><path d="M4 8.500h7" stroke="#fff" />
        </svg>
        <svg className="ml-[9px] h-[14px] w-4" viewBox="0 0 16 14" fill="none" stroke="#fff">
          <path d="M.5.500h4v4h-4zM2.500 5v7.500M5 2.500h10.500v7.500H4.500M9.500 10v3M6.500 13.500h6" />
        </svg>
        <svg className="ml-2 h-3 w-[17px]" viewBox="0 0 17 12" fill="none" stroke="#fff">
          <path d="M.5 4h2.500l3-3v10l-3-3H.5zM8.500 4q1.500 2 0 4M11 2.500q2.500 3.500 0 7M13.500 1q3.500 5 0 10" />
        </svg>
        <span className="ml-[9px] w-[50px] whitespace-nowrap font-['Open_Sans'] text-[12px] leading-4 tracking-[-0.45px] text-white">11:40 AM</span>
        <svg className="ml-[17px] h-4 w-4" viewBox="0 0 16 16" fill="none" stroke="#fff" strokeWidth="1.100">
          <path d="M.6.600h14.800v11.400h-4.600L8.300 15 6 12H.6z" />
        </svg>
        <div className="ml-5 mr-[3px] h-[29px] w-px bg-[#555]" />
      </div>
    </div>
  );
}

export default function App() {
  return (
    <div className="flex h-[1079px] w-[1919px] flex-col overflow-hidden bg-white">
      <TabStrip />
      <Toolbar />
      <AppHeader />
      <div className="flex flex-1">
        <div className="flex flex-1 flex-col bg-[#fafafa]">
          <Artboard />
          <CanvasFooter />
        </div>
        <Inspector />
        <Rail />
      </div>
      <Taskbar />
    </div>
  );
}
